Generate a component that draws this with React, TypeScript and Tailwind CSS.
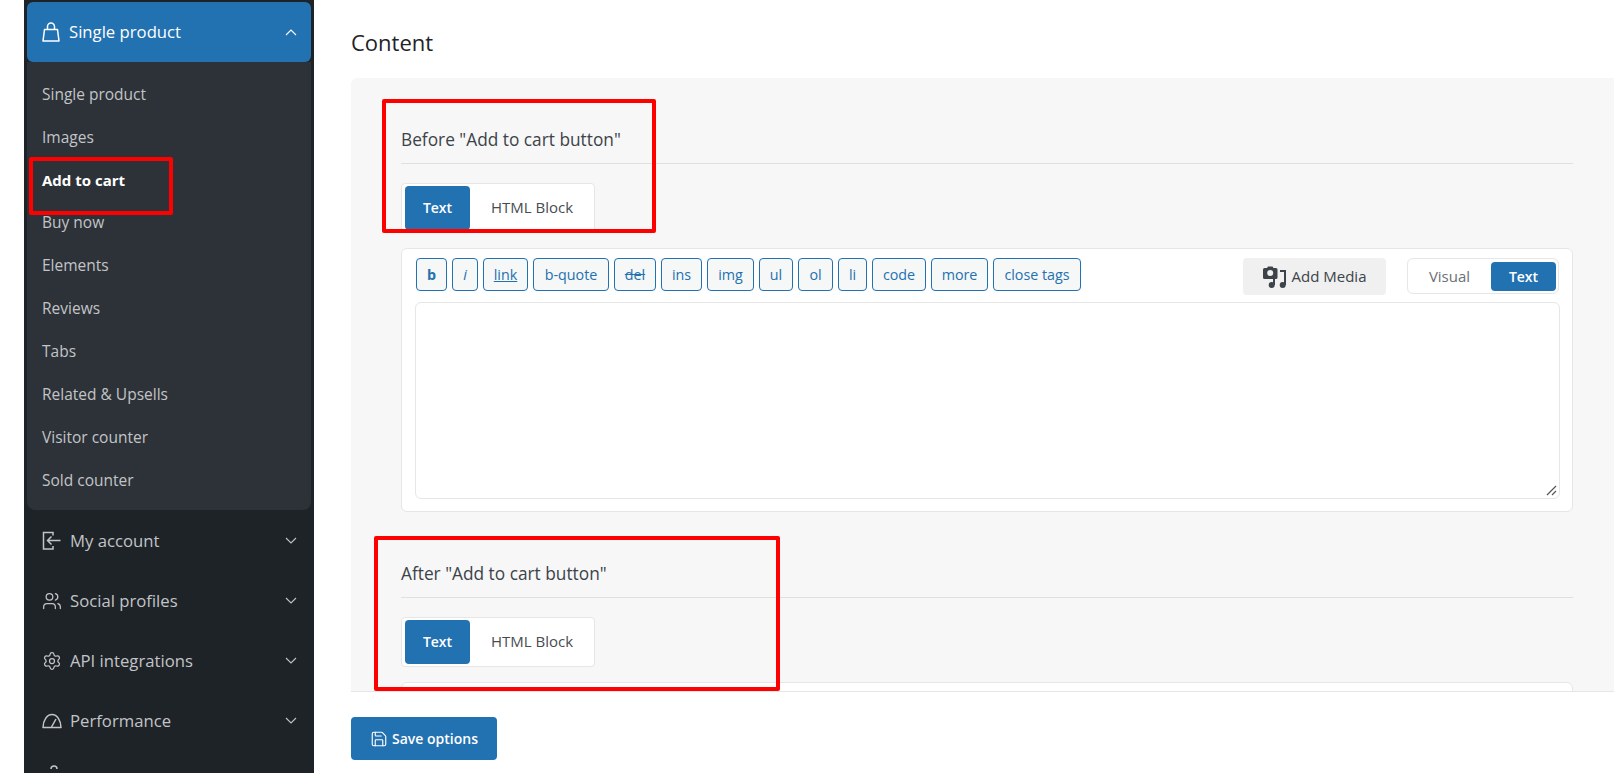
import React from "react";
import { Users, Settings, Save } from "lucide-react";

const subItems = ["Single product", "Images", "Add to cart", "Buy now", "Elements", "Reviews", "Tabs", "Related & Upsells", "Visitor counter", "Sold counter"];

function BagIcon() {
  return (
    <svg className="mr-[9px] shrink-0" width="18" height="20" viewBox="0 0 18 20" fill="none" stroke="currentColor" strokeWidth="1.500" strokeLinejoin="round">
      <path d="M2.500 7.500 L1 19 H17 L15.500 7.500 Z" />
      <path d="M5.500 7.500V4.500a3.500 3.500 0 0 1 7 0v3" />
    </svg>
  );
}
function DoorIcon() {
  return (
    <svg className="mr-[8px] shrink-0" width="20" height="20" viewBox="0 0 20 20" fill="none" stroke="currentColor" strokeWidth="1.500">
      <path d="M11 4.500V1.500H1.500V18H11v-3" />
      <path d="M18.500 9.500H5.500M9.500 5.500l-4 4 4 4" />
    </svg>
  );
}
function GaugeIcon() {
  return (
    <svg className="mr-[8px] shrink-0" width="20" height="16" viewBox="0 0 20 16" fill="none" stroke="currentColor" strokeWidth="1.500" strokeLinejoin="round">
      <path d="M1 14.500 a9 13 0 1 1 18 0 z" />
      <path d="M9.500 14 L14 6" />
    </svg>
  );
}
const UsersIcon = () => <Users className="mr-[8px] shrink-0" size={20} strokeWidth={1.5} />;
const GearIcon = () => <Settings className="mr-[8px] shrink-0" size={20} strokeWidth={1.5} />;

const mainItems = [
  { label: "My account", Icon: DoorIcon },
  { label: "Social profiles", Icon: UsersIcon },
  { label: "API integrations", Icon: GearIcon },
  { label: "Performance", Icon: GaugeIcon },
];
const quicktags = [
  { t: "b", c: "font-bold w-[31px]" },
  { t: "i", c: "italic w-[26px]" },
  { t: "link", c: "underline w-[45px]" },
  { t: "b-quote", c: "w-[76px]" },
  { t: "del", c: "line-through w-[42px]" },
  { t: "ins", c: "w-[41px]" },
  { t: "img", c: "w-[47px]" },
  { t: "ul", c: "w-[34px]" },
  { t: "ol", c: "w-[35px]" },
  { t: "li", c: "w-[29px]" },
  { t: "code", c: "w-[54px]" },
  { t: "more", c: "w-[57px]" },
  { t: "close tags", c: "w-[88px]" },
];

function Chevron({ up }: { up?: boolean }) {
  return (
    <svg width="12" height="7" viewBox="0 0 12 7" fill="none" stroke="currentColor" strokeWidth="1.100" className={up ? "rotate-180" : ""}>
      <path d="M1 1l5 5 5-5" />
    </svg>
  );
}

function Tabs() {
  return (
    <div className="mt-[19px] flex h-[50px] w-[194px] items-center rounded-[4px] border border-[#e6e6e6] bg-white px-[3px] text-[14px]">
      <div className="flex h-[44px] w-[65px] items-center justify-center rounded-[4px] bg-[#2271b1] pb-[2px] font-semibold text-white">Text</div>
      <div className="flex-1 pb-[2px] pl-[3px] text-center text-[15px] text-[#484c50]">HTML Block</div>
    </div>
  );
}

function MediaIcon() {
  return (
    <svg width="24" height="22" viewBox="0 0 24 22" fill="#3c434a" className="shrink-0">
      <path fillRule="evenodd" d="M0 3.500A1.500 1.500 0 0 1 1.500 2H4L5 .5h4.500L10.500 2h2.500A1.500 1.500 0 0 1 14.500 3.500v8A1.500 1.500 0 0 1 13 13H1.500A1.500 1.500 0 0 1 0 11.500zM7.200 4a3 3 0 1 0 0 6 3 3 0 0 0 0-6z" />
      <rect x="10" y="13" width="2" height="6" />
      <circle cx="8.700" cy="19" r="3" />
      <rect x="17" y="4" width="6" height="2" />
      <rect x="21" y="4" width="2" height="15" />
      <circle cx="19.700" cy="19" r="3" />
    </svg>
  );
}

export default function App() {
  return (
    <div className="flex h-[773px] w-[1614px] overflow-hidden bg-white pl-[24px] text-[#3c434a] [font-family:'Open_Sans','Noto_Sans',sans-serif]">
      <aside className="relative flex h-full w-[290px] shrink-0 flex-col bg-[#1d2327] pt-[2px] text-[#c3c4c7]">
        <div className="mx-[3px] flex h-[60px] shrink-0 items-center rounded-[6px] bg-[#2271b1] pl-[15px] pr-[14px] text-[16.700px] text-white">
          <BagIcon />
          <span className="flex-1">Single product</span>
          <Chevron up />
        </div>
        <div className="mx-[3px] h-[448px] shrink-0 rounded-b-[8px] bg-[#2c3238] pt-[11px] text-[15.500px]">
          {subItems.map((s) => (
            <div key={s} className={`flex h-[42.900px] items-center pl-[15px] ${s === "Add to cart" ? "text-[15px] font-bold text-white" : ""}`}>{s}</div>
          ))}
        </div>
        {mainItems.map(({ label, Icon }) => (
          <div key={label} className="mx-[3px] flex h-[60px] shrink-0 items-center pl-[15px] pr-[14px] pt-[1px] text-[16.700px]">
            <Icon />
            <span className="flex-1">{label}</span>
            <Chevron />
          </div>
        ))}
        <div className="mx-[3px] flex h-[60px] shrink-0 items-start px-[15px] pt-[10px]">
          <svg className="ml-[8px]" width="8" height="10" viewBox="0 0 8 10" fill="none" stroke="currentColor" strokeWidth="1.500">
            <path d="M1 9a3 3 0 0 1 6 0" />
          </svg>
        </div>
        <div className="absolute left-[5px] top-[157px] h-[58px] w-[144px] rounded-[2px] border-[4px] border-[#fe0000]" />
      </aside>
      <main className="relative min-w-0 flex-1 pl-[37px]">
        <h1 className="flex h-[78px] items-center pt-[5px] text-[22px] font-medium leading-none text-[#1d2327]">Content</h1>
        <div className="h-[614px] w-[1263px] overflow-hidden rounded-tl-[6px] border-b border-[#e6e6e6] bg-[#f7f7f7] pl-[50px] pr-[41px]">
          <section className="pt-[47px]">
            <h2 className="flex h-[39px] items-center border-b border-[#e0e0e0] pb-[9px] text-[17.300px] font-medium leading-none text-[#3c434a]">Before "Add to cart button"</h2>
            <Tabs />
            <div className="mt-[15px] h-[264px] rounded-[6px] border border-[#e6e6e6] bg-white px-[13px] pt-[9px]">
              <div className="flex h-[37px] items-start">
                <div className="ml-[1px] flex gap-[5px]">
                  {quicktags.map((q) => (
                    <div key={q.t} className={`flex h-[33px] items-center justify-center rounded-[4px] border border-[#2271b1] bg-[#f6f7f7] text-[14.300px] text-[#2271b1] ${q.c}`}>{q.t}</div>
                  ))}
                </div>
                <div className="ml-auto flex h-[37px] w-[143px] items-center justify-center gap-[5px] rounded-[4px] bg-[#f0f0f0] text-[15px] font-medium text-[#3c434a]">
                  <MediaIcon />
                  <span>Add Media</span>
                </div>
                <div className="ml-[21px] flex h-[36px] w-[152px] items-center rounded-[6px] border border-[#e6e6e6] bg-white pr-[2px] text-[14px]">
                  <div className="flex-1 text-center text-[15px] font-medium text-[#6b7075]">Visual</div>
                  <div className="flex h-[29px] w-[65px] items-center justify-center rounded-[4px] bg-[#2271b1] font-semibold text-white">Text</div>
                </div>
              </div>
              <div className="relative mr-[-1px] mt-[7px] h-[197px] rounded-[6px] border border-[#e6e6e6] bg-white">
                <svg className="absolute bottom-[2px] right-[2px]" width="11" height="11" viewBox="0 0 11 11" stroke="#555" strokeWidth="1.200">
                  <path d="M1 10 L10 1 M6 10 L10 6" />
                </svg>
              </div>
            </div>
          </section>
          <section className="pt-[47px]">
            <h2 className="flex h-[39px] items-center border-b border-[#e0e0e0] pb-[9px] text-[17.300px] font-medium leading-none text-[#3c434a]">After "Add to cart button"</h2>
            <Tabs />
            <div className="mt-[15px] h-[264px] rounded-[6px] border border-[#e6e6e6] bg-white" />
          </section>
        </div>
        <button className="mt-[25px] flex h-[43px] w-[146px] items-center justify-center gap-[4px] rounded-[4px] bg-[#2271b1] text-[14px] font-semibold text-white">
          <Save size={18} strokeWidth={1.5} />
          Save options
        </button>
        <div className="absolute left-[68px] top-[99px] h-[134px] w-[274px] rounded-[2px] border-[4px] border-[#fe0000]" />
        <div className="absolute left-[60px] top-[536px] h-[155px] w-[406px] rounded-[2px] border-[4px] border-[#fe0000]" />
      </main>
    </div>
  );
}
